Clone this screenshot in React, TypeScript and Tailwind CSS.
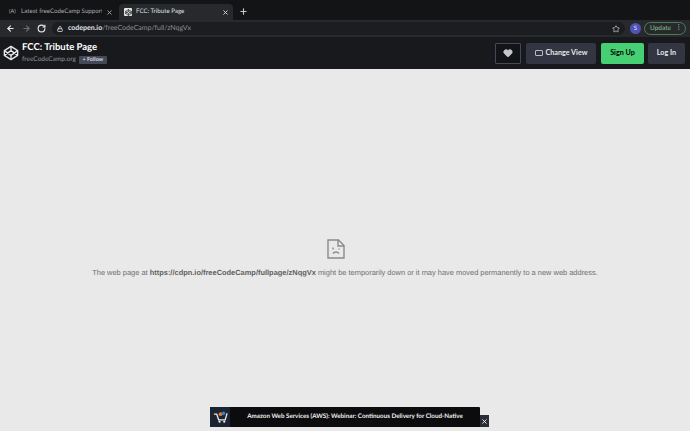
import React from "react";
import { ArrowLeft, ArrowRight, RotateCw, Lock, Star, X, Plus, Heart } from "lucide-react";

const sans = "font-['Liberation_Sans',Arial,sans-serif]";
const lato = "font-['Lato',sans-serif]";

function CodepenLogo({ className }: { className?: string }) {
  return (
    <svg viewBox="0 0 24 24" fill="none" stroke="currentColor" strokeWidth="2" strokeLinejoin="round" className={className}>
      <path d="M12 2 22 8.5v7L12 22 2 15.5v-7z" />
      <path d="M12 22v-6.5M22 8.5l-10 7-10-7M2 15.5l10-7 10 7M12 2v6.5" />
    </svg>
  );
}

function SadPage() {
  return (
    <svg viewBox="0 0 18 20" fill="none" stroke="#8a8a8a" strokeWidth="1.4" className="w-[18px] h-[20px] mr-[18px]">
      <path d="M1 1h10.5L17 6.5V19H1z" />
      <path d="M11 1v6h6" />
      <path d="M6 14.5c1.5-2 4.5-2 6 0" />
      <path d="M6 8.5v2M12 9.5v1" />
    </svg>
  );
}

function TabBar() {
  return (
    <div className={`h-[20px] bg-[#131416] flex items-end pl-[3px] text-[6.2px] shrink-0 ${lato}`}>
      <div className="w-[113px] h-[16px] flex items-center pl-[6px] pr-[3px] text-[#a9acb1]">
        <span className="w-[12px] text-[5.5px] shrink-0">(A)</span>
        <span className="overflow-hidden whitespace-nowrap flex-1">Latest freeCodeCamp Support</span>
        <X className="w-[7px] h-[7px] ml-[4px] shrink-0" strokeWidth={3} />
      </div>
      <div className="w-[114px] h-[16px] ml-[3px] bg-[#28292c] rounded-t-[4px] flex items-center pl-[5px] pr-[4px] text-[#dfe1e4]">
        <span className="w-[8px] h-[8px] bg-[#e5e5e5] rounded-[1px] flex items-center justify-center shrink-0">
          <CodepenLogo className="w-[7px] h-[7px] text-black" />
        </span>
        <span className="ml-[4px] flex-1 whitespace-nowrap">FCC: Tribute Page</span>
        <X className="w-[7px] h-[7px] shrink-0" strokeWidth={3} />
      </div>
      <Plus className="w-[9px] h-[9px] text-[#c4c7cc] ml-[6px] mb-[4px]" strokeWidth={3} />
    </div>
  );
}

function AddressBar() {
  return (
    <div className={`h-[17px] bg-[#28292c] flex items-center shrink-0 pl-[6px] pr-[4px] ${lato}`}>
      <ArrowLeft className="w-[9px] h-[9px] text-[#e3e5e8]" strokeWidth={3} />
      <ArrowRight className="w-[9px] h-[9px] text-[#6a6d72] ml-[7px]" strokeWidth={3} />
      <RotateCw className="w-[9px] h-[9px] text-[#e3e5e8] ml-[6px]" strokeWidth={3} />
      <div className="ml-[6px] h-[13px] flex-1 bg-[#1c1d20] rounded-full flex items-center pl-[5px] pr-[5px] text-[7px]">
        <Lock className="w-[6px] h-[6px] text-[#e3e5e8]" strokeWidth={3} />
        <span className="ml-[5px] whitespace-nowrap font-bold text-[#e3e5e8]">
          codepen.io<span className="font-normal text-[#8b8e93]">/freeCodeCamp/full/zNqgVx</span>
        </span>
        <Star className="w-[8px] h-[8px] text-[#d9dbde] ml-auto" strokeWidth={2} />
      </div>
      <span className="ml-[5px] w-[11px] h-[11px] rounded-full bg-[#4e54b5] text-[#e6e6f5] text-[6px] flex items-center justify-center shrink-0">S</span>
      <div className="ml-[3px] w-[42px] h-[13px] rounded-full border border-[#4f7a58] flex items-center justify-between pl-[5px] pr-[3px] text-[6.5px] text-[#86c792] shrink-0">
        <span>Update</span>
        <span className="font-bold leading-none">⋮</span>
      </div>
    </div>
  );
}

function PenHeader() {
  return (
    <div className={`h-[32px] bg-[#18191d] flex items-center pl-[3px] pr-[5px] shrink-0 ${lato}`}>
      <CodepenLogo className="w-[16px] h-[16px] text-[#e8e8e8]" />
      <div className="ml-[3px] flex flex-col">
        <span className="text-[9.5px] leading-[12px] font-bold text-white whitespace-nowrap">FCC: Tribute Page</span>
        <div className="flex items-center mt-[1px]">
          <span className="text-[6.5px] leading-[9px] text-[#8f929b]">freeCodeCamp.org</span>
          <span className="ml-[3px] h-[8px] w-[28px] text-center bg-[#444857] rounded-[1px] text-[5.5px] leading-[8px] font-bold text-[#d5d7de] whitespace-nowrap">+ Follow</span>
        </div>
      </div>
      <button className="ml-auto w-[26px] h-[21px] border border-[#444857] rounded-[1px] flex items-center justify-center bg-[#131417]">
        <Heart className="w-[10px] h-[10px] text-[#c4c6cc]" fill="currentColor" />
      </button>
      <button className="ml-[5px] w-[70px] h-[21px] bg-[#333642] rounded-[2px] flex items-center justify-center text-[7.2px] font-bold text-[#e6e7ea] whitespace-nowrap">
        <span className="w-[8px] h-[6px] border border-[#b9bbc2] rounded-[1px] mr-[3px]" />
        Change View
      </button>
      <button className="ml-[5px] w-[43px] h-[21px] bg-[#47cf73] rounded-[2px] text-[7.2px] font-bold text-black whitespace-nowrap">Sign Up</button>
      <button className="ml-[4px] w-[37px] h-[21px] bg-[#333642] rounded-[2px] text-[7.2px] font-bold text-[#e6e7ea] whitespace-nowrap">Log In</button>
    </div>
  );
}

function AdBanner() {
  return (
    <div className="absolute left-[210px] top-[407px] flex items-end">
      <div className="w-[270px] h-[20px] bg-[#0c0c0e] flex items-center rounded-t-[1px]">
        <div className="w-[20px] h-[20px] bg-[#1b2430] flex items-center justify-center shrink-0">
          <svg viewBox="0 0 16 14" className="w-[15px] h-[14px]" fill="none">
            <path d="M1 4h3l2 6h7l2-7" stroke="#e8e8e8" strokeWidth="1.4" />
            <circle cx="7" cy="12" r="1.2" fill="#e8e8e8" />
            <circle cx="12" cy="12" r="1.2" fill="#e8e8e8" />
            <circle cx="8" cy="4" r="2" fill="#e07a2c" />
            <circle cx="11" cy="3" r="2" fill="#3b7fc4" />
          </svg>
        </div>
        <span className={`flex-1 text-center text-[6.25px] font-bold text-[#f0f0f0] whitespace-nowrap ${lato}`}>
          Amazon Web Services (AWS): Webinar: Continuous Delivery for Cloud-Native
        </span>
      </div>
      <div className="w-[9px] h-[12px] bg-[#2a2d33] flex items-center justify-center">
        <X className="w-[7px] h-[7px] text-white" strokeWidth={3} />
      </div>
    </div>
  );
}

export default function App() {
  return (
    <div className={`w-[690px] h-[431px] relative overflow-hidden flex flex-col bg-[#e9e9e9] [text-rendering:geometricPrecision] ${sans}`}>
      <TabBar />
      <AddressBar />
      <PenHeader />
      <div className="flex-1 flex flex-col items-center pt-[170px]">
        <SadPage />
        <p className="mt-[8px] text-[7.45px] leading-[11px] text-[#6f6f6f] whitespace-nowrap">
          The web page at <b className="text-[#5f5f5f]">https://cdpn.io/freeCodeCamp/fullpage/zNqgVx</b> might be temporarily down or it may have moved permanently to a new web address.
        </p>
      </div>
      <AdBanner />
    </div>
  );
}
